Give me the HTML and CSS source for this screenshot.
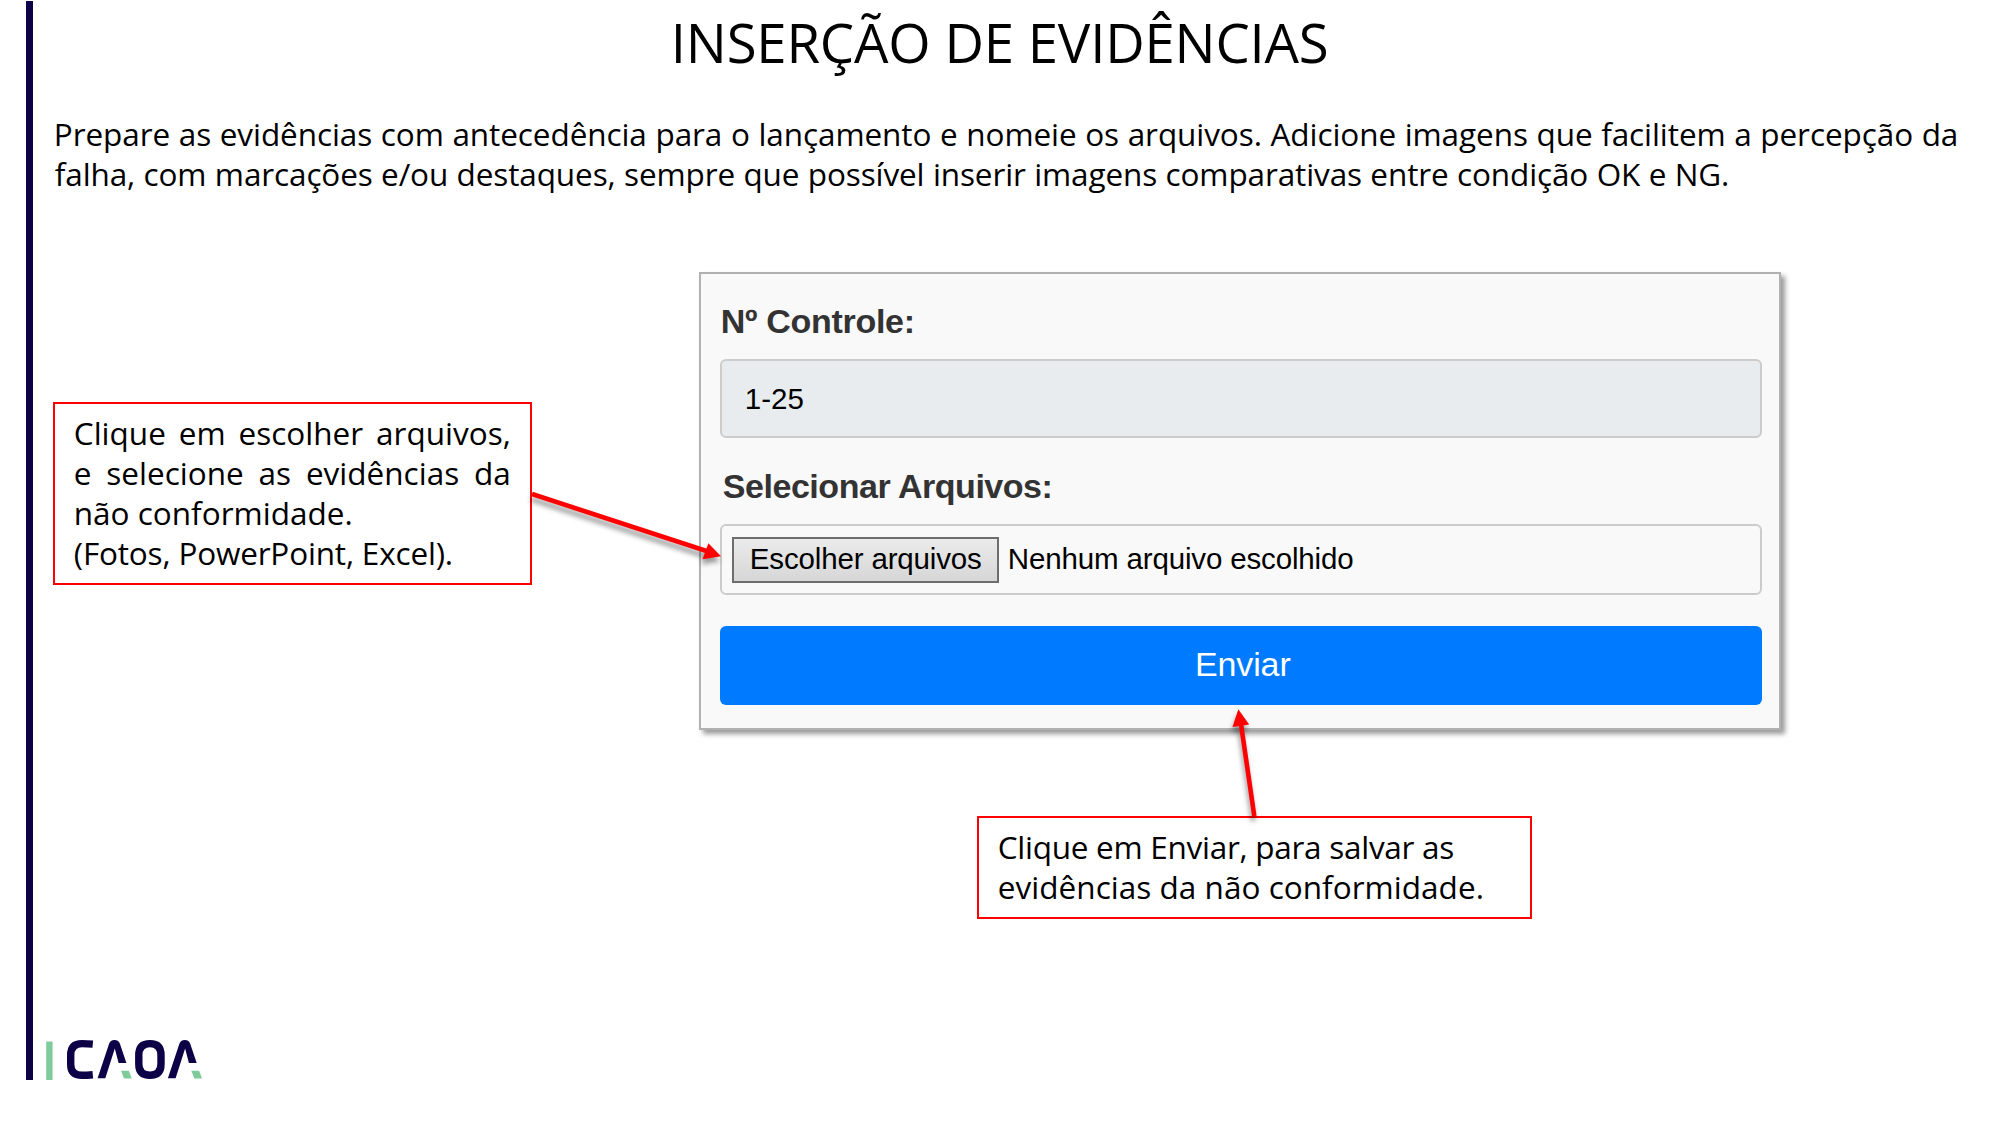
FILE: index.html
```html
<!DOCTYPE html>
<html lang="pt-BR">
<head>
<meta charset="utf-8">
<title>Inserção de Evidências</title>
<link rel="stylesheet" href="styles.css">
</head>
<body>
<div class="slide">
  <div class="rail"></div>
  <main class="content">
    <h1 class="title">INSERÇÃO DE EVIDÊNCIAS</h1>
    <p class="intro">
      <span class="line intro-first">Prepare as evidências com antecedência para o lançamento e nomeie os arquivos. Adicione imagens que facilitem a percepção da</span>
      <span class="line intro-second">falha, com marcações e/ou destaques, sempre que possível inserir imagens comparativas entre condição OK e NG.</span>
    </p>

    <section class="stage">
      <div class="callout callout-files">
        <span class="line spread">Clique em escolher arquivos,</span>
        <span class="line spread">e selecione as evidências da</span>
        <span class="line">não conformidade.</span>
        <span class="line powerpoint">(Fotos, PowerPoint, Excel).</span>
      </div>

      <form class="card">
        <label class="label label-control">Nº Controle:</label>
        <div class="field field-readonly">1-25</div>
        <label class="label label-files">Selecionar Arquivos:</label>
        <div class="field field-file">
          <span class="choose">Escolher arquivos</span>
          <span class="status">Nenhum arquivo escolhido</span>
        </div>
        <button class="submit" type="button">Enviar</button>
      </form>
    </section>

    <div class="callout callout-send">
      <span class="line send-first">Clique em Enviar, para salvar as</span>
      <span class="line send-second">evidências da não conformidade.</span>
    </div>

    <svg class="logo" width="158" height="42" viewBox="46 1039 158 42" role="img" aria-label="CAOA">
      <rect x="46.2" y="1041.5" width="6.4" height="38.5" fill="#80cb9b"/>
      <g fill="none" stroke="#0c0047" stroke-width="7.4">
        <path d="M92.8 1044.1Q87 1043.6 82 1043.6Q70.7 1043.6 70.7 1055V1064.5Q70.7 1075.3 82 1075.3Q87 1075.3 92.8 1074.7"/>
        <path d="M150 1043.6Q161 1043.6 161 1055V1064Q161 1075.3 150 1075.3Q138.800 1075.3 138.800 1064V1055Q138.800 1043.600 150 1043.600Z"/>
      </g>
      <g fill="#0c0047">
        <path id="a" d="M97.600 1078.300L109 1044Q110.300 1039.900 114.500 1039.900Q118.700 1039.900 120 1044L126.400 1063H118.600L114.800 1048.500L105.300 1078.300Z"/>
        <use href="#a" x="70.3"/>
      </g>
      <g fill="#80cb9b">
        <path id="b" d="M121 1070.700H128.800L131.800 1078.500H124Z"/>
        <use href="#b" x="70.3"/>
      </g>
    </svg>
  </main>

  <svg class="arrows" width="2000" height="1125" viewBox="0 0 2000 1125" fill="#f00" stroke="#f00" stroke-width="4.6">
    <g class="arrow">
      <path d="M532 494L708 551.500"/>
      <path stroke="none" d="M721 556.300L708.400 543.300L702.500 559.200Z"/>
    </g>
    <g class="arrow">
      <path d="M1254.300 816L1241 724"/>
      <path stroke="none" d="M1238.300 709.300L1232.500 727L1249.200 724.600Z"/>
    </g>
  </svg>
</div>
</body>
</html>
```
FILE: styles.css
```css
* { box-sizing: border-box; }

body {
  margin: 0;
  background: #fff;
  color: #000;
  font-family: "Open Sans", "Noto Sans", sans-serif;
}

.slide {
  position: relative;
  display: flex;
  width: 2000px;
  height: 1125px;
  overflow: hidden;
}

.rail {
  flex: none;
  width: 6.5px;
  height: 1079px;
  margin: 1px 0 0 26.3px;
  background: #0c0047;
}

.content {
  flex: 1;
  display: flex;
  flex-direction: column;
  align-items: flex-start;
}

.title {
  margin: 4px 0 0 638px;
  font-size: 54.5px;
  font-weight: 400;
  line-height: 76px;
  letter-spacing: -0.2px;
  white-space: nowrap;
}

.intro {
  margin: 34px 0 0 21px;
  font-size: 31.5px;
  line-height: 40px;
}

.line {
  display: block;
  white-space: nowrap;
}

.intro-first { letter-spacing: -0.08px; word-spacing: 0.55px; }
.intro-second { margin-left: 1px; letter-spacing: -0.12px; word-spacing: 0.4px; }

.stage {
  display: flex;
  align-items: flex-start;
  margin: 78px 0 0 20px;
}

.callout {
  border: 2px solid #f00;
  background: #fff;
  font-size: 31.5px;
  line-height: 40px;
}

.callout-files {
  width: 479px;
  height: 183px;
  margin-top: 130px;
  padding: 9px 19px 0 19px;
}

.spread {
  text-align: justify;
  text-align-last: justify;
}

.powerpoint { letter-spacing: -0.178px; }

.card {
  display: flex;
  flex-direction: column;
  width: 1082px;
  height: 458px;
  margin-left: 167px;
  padding: 27px 17px 23px 19px;
  border: 2px solid #b1b1b1;
  background: #f9f9f9;
  box-shadow: 4px 4px 5px rgba(0, 0, 0, 0.4);
  font-family: "Liberation Sans", Arial, sans-serif;
}

.label {
  font-size: 34px;
  font-weight: 700;
  line-height: 40px;
  color: #333;
  white-space: nowrap;
}

.label-control { margin: 0 0 1px 1px; letter-spacing: -0.3px; }
.label-files { margin: 28px 0 1px 3px; letter-spacing: -0.46px; }

.field {
  display: flex;
  align-items: center;
  margin-top: 17px;
  border: 2px solid #ccc;
  border-radius: 6px;
  font-size: 29.5px;
  line-height: 34px;
  white-space: nowrap;
}

.field-readonly {
  height: 79px;
  padding: 0 0 0 23px;
  background: #e9ecef;
}

.field-file {
  height: 71px;
  padding: 0 10px;
  letter-spacing: -0.15px;
}

.choose {
  width: 267px;
  height: 46px;
  padding: 3px 0 0 16px;
  border: 2px solid #6d6d6d;
  background: linear-gradient(#ebebeb, #d6d6d6);
}

.status { margin: 0 0 2px 9px; }

.submit {
  height: 79px;
  margin-top: 31px;
  padding: 0 0 4px 4px;
  border: 0;
  border-radius: 6px;
  background: #007bff;
  color: #fff;
  font: 34px/40px "Liberation Sans", Arial, sans-serif;
  letter-spacing: -0.13px;
}

.callout-send {
  width: 555px;
  height: 103px;
  margin: 86px 0 0 944px;
  padding: 9px 0 0 19px;
}

.send-first { letter-spacing: -0.276px; }
.send-second { letter-spacing: 0.03px; }

.logo { margin: 120px 0 0 13.2px; }

.arrows {
  position: absolute;
  inset: 0;
}

.arrow { filter: drop-shadow(-1px 5px 2.5px rgba(0, 0, 0, 0.4)); }
```
